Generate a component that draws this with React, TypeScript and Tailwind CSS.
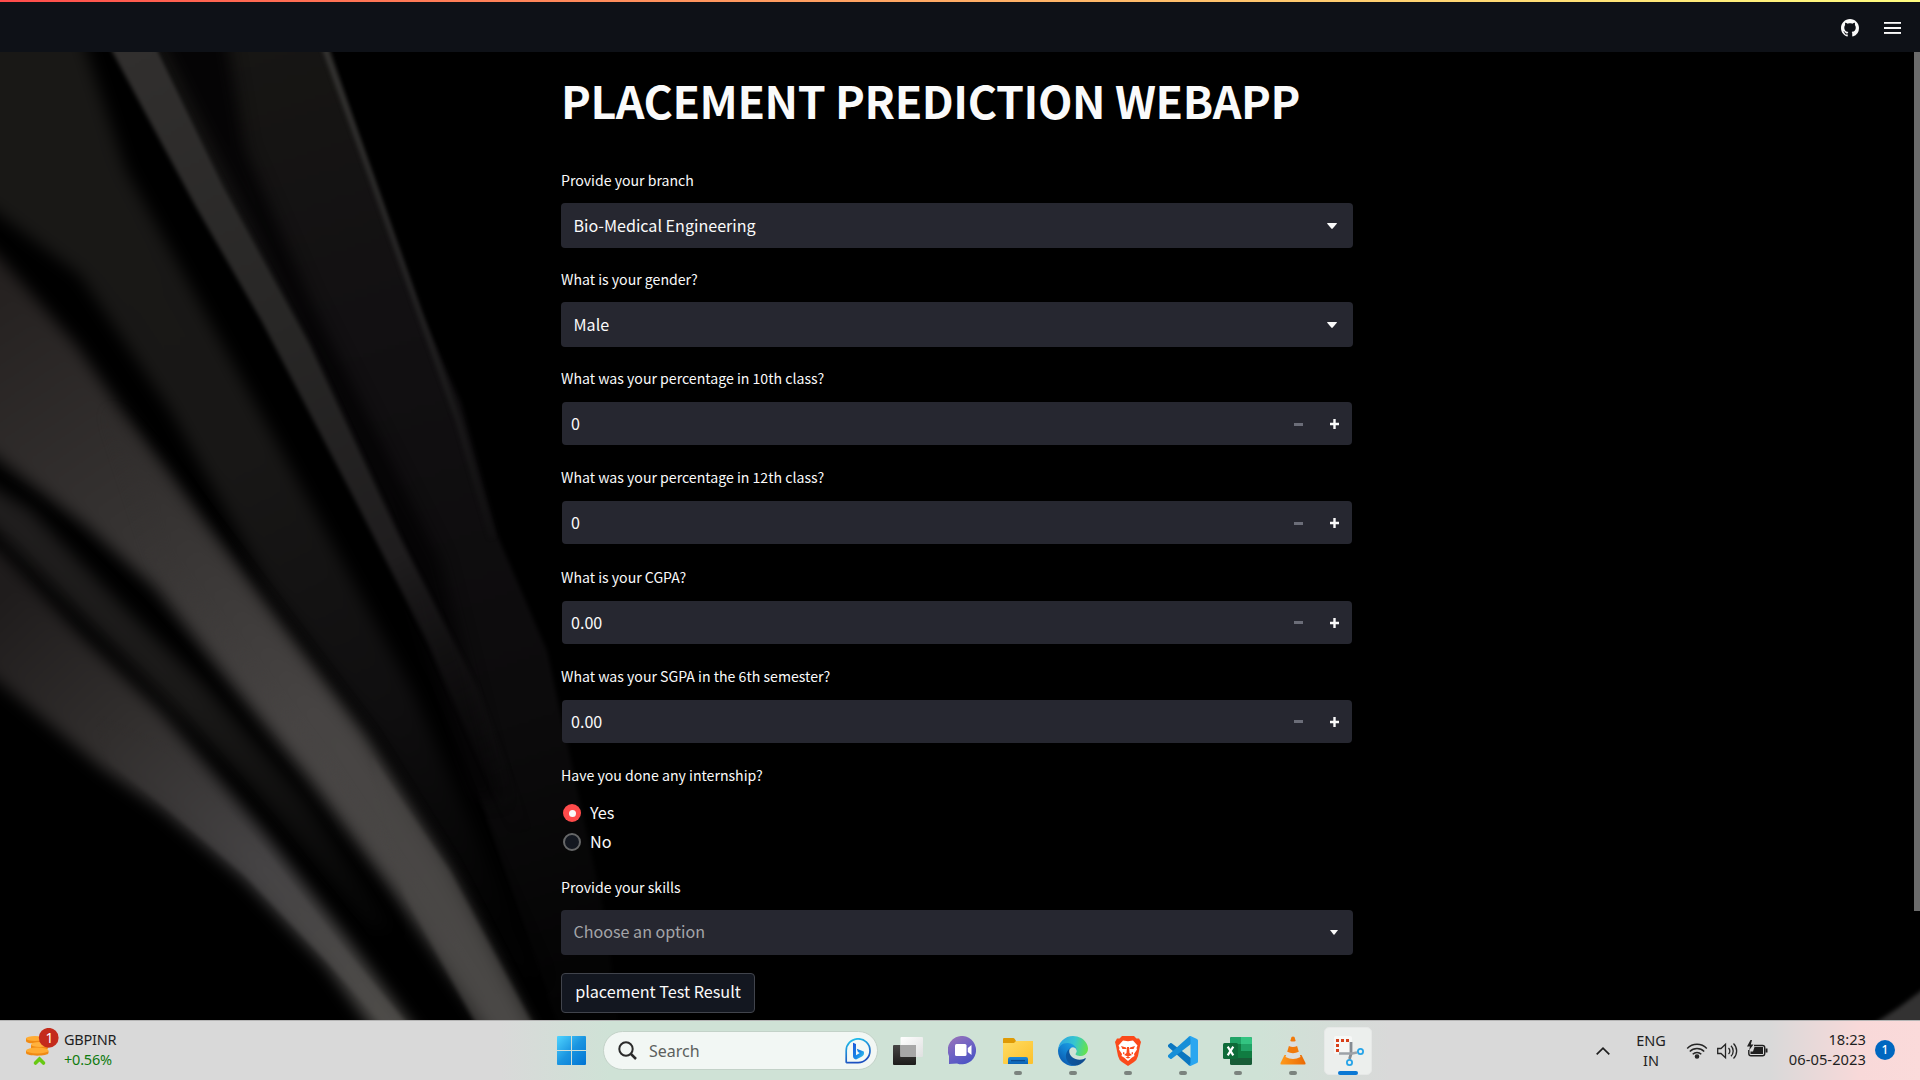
import type { ReactNode } from "react";

const SANS = "font-['Noto_Sans_CJK_SC','Noto_Sans',sans-serif]";

function Backdrop() {
  return (
    <svg className="absolute inset-0 h-full w-full" viewBox="0 52 1920 968" preserveAspectRatio="none" aria-hidden="true">
      <defs>
        <filter id="soft" x="-10%" y="-10%" width="120%" height="120%" colorInterpolationFilters="sRGB"><feGaussianBlur stdDeviation="2" /></filter>
        <filter id="softer" x="-20%" y="-20%" width="140%" height="140%" colorInterpolationFilters="sRGB"><feGaussianBlur stdDeviation="8" /></filter>
        <filter id="softest" x="-20%" y="-20%" width="140%" height="140%" colorInterpolationFilters="sRGB"><feGaussianBlur stdDeviation="16" /></filter>
        <linearGradient id="gA" gradientUnits="userSpaceOnUse" x1="130" y1="52" x2="530" y2="830">
          <stop offset="0" stopColor="#312f2e" /><stop offset=".35" stopColor="#282726" /><stop offset=".65" stopColor="#1f1d1e" /><stop offset="1" stopColor="#0d0c0d" stopOpacity="0" />
        </linearGradient>
        <linearGradient id="gB" gradientUnits="userSpaceOnUse" x1="240" y1="52" x2="560" y2="1020">
          <stop offset="0" stopColor="#171614" /><stop offset=".3" stopColor="#121012" /><stop offset=".7" stopColor="#0c0b0c" /><stop offset="1" stopColor="#030303" />
        </linearGradient>
        <linearGradient id="gC" gradientUnits="userSpaceOnUse" x1="60" y1="52" x2="500" y2="930">
          <stop offset="0" stopColor="#191816" /><stop offset=".45" stopColor="#181716" /><stop offset=".75" stopColor="#0f0e0f" /><stop offset="1" stopColor="#020202" />
        </linearGradient>
        <linearGradient id="gE" gradientUnits="userSpaceOnUse" x1="0" y1="280" x2="500" y2="1020">
          <stop offset="0" stopColor="#252120" /><stop offset=".3" stopColor="#353231" /><stop offset=".6" stopColor="#474443" /><stop offset="1" stopColor="#4b4947" />
        </linearGradient>
        <linearGradient id="gF" gradientUnits="userSpaceOnUse" x1="0" y1="480" x2="370" y2="920">
          <stop offset="0" stopColor="#201e1e" /><stop offset=".5" stopColor="#1a1918" /><stop offset="1" stopColor="#060606" />
        </linearGradient>
        <linearGradient id="gH" gradientUnits="userSpaceOnUse" x1="0" y1="600" x2="400" y2="1020">
          <stop offset="0" stopColor="#1f1c1c" /><stop offset=".3" stopColor="#312e2d" /><stop offset=".65" stopColor="#464445" /><stop offset="1" stopColor="#4f4d4a" />
        </linearGradient>
        <linearGradient id="gEdge" gradientUnits="userSpaceOnUse" x1="320" y1="52" x2="500" y2="560">
          <stop offset="0" stopColor="#3a3937" /><stop offset=".5" stopColor="#262525" /><stop offset="1" stopColor="#0f0e0f" />
        </linearGradient>
      </defs>
      <rect y="52" width="1920" height="968" fill="#000" />
      <polygon points="155,40 327,40 371,172 420,310 461,403 498,537 547,651 604,913 620,1030 560,1030 480,800 384,500 310,344 224,186" fill="url(#gB)" filter="url(#soft)" />
      <polygon points="155,30 225,30 245,150 310,300 440,560 500,800 470,800 384,510 250,220" fill="#050405" filter="url(#softer)" />
      <polyline points="322,40 329,60 371,176 420,314 458,420 492,537" fill="none" stroke="url(#gEdge)" strokeWidth="5" filter="url(#soft)" />
      <polygon points="-40,20 76,20 126,170 209,320 314,510 412,690 540,980 500,960 380,740 270,590 170,410 80,275 -40,185" fill="url(#gC)" filter="url(#softer)" />
      <polygon points="106,40 153,40 224,186 310,344 400,537 478,689 530,830 510,830 429,645 355,500 261,320 196,207" fill="url(#gA)" filter="url(#soft)" />
      <polygon points="-40,225 0,258 77,346 158,463 200,521 282,630 363,737 445,868 536,1045 500,1045 392,889 306,776 224,675 155,588 85,525 -40,430" fill="url(#gE)" filter="url(#softer)" />
      <polygon points="110,410 163,467 204,524 286,634 367,741 449,873 538,1045 505,1045 415,900 325,770 240,660 160,560" fill="url(#gE)" filter="url(#softer)" opacity=".6" />
      <polygon points="370,755 449,870 541,1040 485,1040 405,895" fill="url(#gE)" filter="url(#soft)" opacity=".6" />
      <polygon points="-20,480 30,510 122,605 204,685 306,800 390,930 370,925 250,785 122,655 -20,515" fill="url(#gF)" filter="url(#softer)" />
      <polygon points="-40,535 0,550 80,635 161,712 263,832 345,937 425,1045 385,1045 327,965 245,879 163,810 102,768 0,683 -40,655" fill="url(#gH)" filter="url(#softer)" />
      <polygon points="100,720 170,750 265,850 345,950 416,1035 393,1035 327,961 245,875 163,805 110,762" fill="url(#gH)" filter="url(#soft)" opacity=".7" />
      <polygon points="1872,1025 1898,1008 1925,988 1925,1025" fill="#333232" filter="url(#soft)" />
    </svg>
  );
}

function Label({ children }: { children: ReactNode }) {
  return <div className="mb-[11px] h-6 whitespace-nowrap text-[14.12px] leading-6 text-[#fafafa]">{children}</div>;
}

function Select({ label, value }: { label: string; value: string }) {
  return (
    <div className="mb-[19.160px]">
      <Label>{label}</Label>
      <div className="flex h-[45px] items-center justify-between rounded-[4px] bg-[#262730] pl-[12.5px] pr-4">
        <span className="mb-[2px] text-[16.1px] leading-6 text-[#fafafa]">{value}</span>
        <svg className="mt-px" width="10" height="6" viewBox="0 0 10 6"><path d="M0 0.4Q0 0 .6 0H9.4Q10 0 10 .5L5.7 5.6Q5 6.2 4.3 5.6Z" fill="#fafafa" /></svg>
      </div>
    </div>
  );
}

function NumberField({ label, value }: { label: string; value: string }) {
  return (
    <div className="mb-[19.160px]">
      <Label>{label}</Label>
      <div className="h-[45px] p-px">
        <div className="flex h-[43px] items-center rounded-[4px] bg-[#262730] pl-[9px] pr-[13px]">
          <span className="mb-px flex-1 text-[16.1px] leading-6 text-[#fafafa]">{value}</span>
          <span className="mr-[27px] mt-px h-[3px] w-[9px] bg-[#6b6d78]" />
          <svg className="mt-px" width="9" height="10" viewBox="0 0 9 10"><path d="M4.5 0v10M0 5h9" stroke="#fafafa" strokeWidth="2.4" /></svg>
        </div>
      </div>
    </div>
  );
}

function Radio({ label, on }: { label: string; on?: boolean }) {
  return (
    <div className="flex h-[29px] items-center gap-[9px] pl-[2px]">
      {on ? (
        <span className="flex size-[18px] items-center justify-center rounded-full bg-[#ff4b4b]"><span className="size-[7px] rounded-full bg-[#fafafa]" /></span>
      ) : (
        <span className="size-[18px] rounded-full border-2 border-[#666768] bg-[#131720]" />
      )}
      <span className="mb-[2px] text-[16.2px] leading-6 text-[#fafafa]">{label}</span>
    </div>
  );
}

function Header() {
  return (
    <header className="h-[52px] bg-[#0e1117]">
      <div className="h-[2px] bg-gradient-to-r from-[#ff4b4b] to-[#fffd80]" />
      <div className="flex h-[50px] items-center justify-end gap-[25px] pr-[19px] pb-px">
        <svg className="mt-[3px]" width="18" height="18" viewBox="0 0 16 16" fill="#fafafa"><path fillRule="evenodd" d="M8 0C3.58 0 0 3.58 0 8c0 3.54 2.29 6.53 5.47 7.59.4.07.55-.17.55-.38 0-.19-.01-.82-.01-1.49-2.01.37-2.53-.49-2.69-.94-.09-.23-.48-.94-.82-1.13-.28-.15-.68-.52-.01-.53.63-.01 1.08.58 1.23.82.72 1.21 1.87.87 2.33.66.07-.52.28-.87.51-1.07-1.78-.2-3.64-.89-3.64-3.95 0-.87.31-1.59.82-2.15-.08-.2-.36-1.02.08-2.12 0 0 .67-.21 2.2.82.64-.18 1.32-.27 2-.27s1.36.09 2 .27c1.53-1.04 2.2-.82 2.2-.82.44 1.1.16 1.92.08 2.12.51.56.82 1.27.82 2.15 0 3.07-1.87 3.75-3.65 3.95.29.25.54.73.54 1.48 0 1.07-.01 1.93-.01 2.2 0 .21.15.46.55.38A8.01 8.01 0 0 0 16 8c0-4.42-3.58-8-8-8Z" /></svg>
        <svg className="mt-[3px]" width="17" height="12" viewBox="0 0 17 12" fill="#fafafa"><rect y="0" width="17" height="1.8" /><rect y="5" width="17" height="2" /><rect y="10" width="17" height="1.9" /></svg>
      </div>
    </header>
  );
}

function WindowsIcon() {
  return (
    <svg width="29" height="29" viewBox="0 0 29 29">
      <defs><linearGradient id="win" gradientUnits="userSpaceOnUse" x1="0" y1="0" x2="29" y2="29"><stop offset="0" stopColor="#4fd4ff" /><stop offset=".5" stopColor="#1b95e0" /><stop offset="1" stopColor="#0074d4" /></linearGradient></defs>
      <path fill="url(#win)" d="M1 0H14V14H0V1Q0 0 1 0ZM15 0H28Q29 0 29 1V14H15ZM0 15H14V29H1Q0 29 0 28ZM15 15H29V28Q29 29 28 29H15Z" />
    </svg>
  );
}

function BingIcon() {
  return (
    <svg width="26" height="26" viewBox="0 0 26 26">
      <defs>
        <linearGradient id="bingRing" x1="0" y1="0" x2=".3" y2="1"><stop offset="0" stopColor="#22c8ee" /><stop offset="1" stopColor="#1c4fc0" /></linearGradient>
        <linearGradient id="bingB" x1="0" y1="0" x2="1" y2="1"><stop offset="0" stopColor="#1c55d8" /><stop offset=".6" stopColor="#1a8ce8" /><stop offset="1" stopColor="#3fd5e8" /></linearGradient>
      </defs>
      <path d="M1.2 24.8V13A11.9 11.9 0 1 1 13 24.6H1.2Z" fill="#f4f9f6" stroke="url(#bingRing)" strokeWidth="1.7" />
      <path d="M8 4.8L11 6V17.2L14.8 15L12.9 14L11.8 10.8L18.8 13.6Q19.8 17 17 18.6L11 21.5Q8 20.5 8 18Z" fill="url(#bingB)" />
    </svg>
  );
}

function TaskViewIcon() {
  return (
    <svg width="30" height="28" viewBox="0 0 30 28">
      <defs><linearGradient id="tvD" x1="0" y1="0" x2="0" y2="1"><stop offset="0" stopColor="#474645" /><stop offset="1" stopColor="#1d1c1b" /></linearGradient><linearGradient id="tvL" x1="0" y1="0" x2="1" y2="1"><stop offset="0" stopColor="#fff" /><stop offset="1" stopColor="#dfe0e0" /></linearGradient></defs>
      <rect y="8" width="23" height="20" rx="1" fill="url(#tvD)" />
      <rect x="7.5" width="22.5" height="20" rx="1" fill="url(#tvL)" />
      <rect x="7.5" y="8" width="15.5" height="12" fill="#a7a7a7" />
    </svg>
  );
}

function ChatIcon() {
  return (
    <svg width="30" height="29" viewBox="0 0 30 29">
      <defs><linearGradient id="chat" x1=".1" y1="0" x2=".7" y2="1"><stop offset="0" stopColor="#9a73b8" /><stop offset=".5" stopColor="#7063c4" /><stop offset="1" stopColor="#4b53c4" /></linearGradient></defs>
      <path d="M15 0A14.2 14.2 0 1 1 9 27.5L1 28V20A14.2 14.2 0 0 1 15 0Z" fill="url(#chat)" />
      <rect x="7" y="8" width="11.5" height="12" rx="1.5" fill="#fff" /><path d="M19.8 12L23.5 9V19L19.8 16Z" fill="#fff" />
    </svg>
  );
}

function FolderIcon() {
  return (
    <svg width="30" height="28" viewBox="0 0 30 28">
      <defs><linearGradient id="fold" x1="0" y1="0" x2="1" y2="1"><stop offset="0" stopColor="#ffdc62" /><stop offset="1" stopColor="#fcc02b" /></linearGradient><linearGradient id="foldB" x1="0" y1="0" x2="0" y2="1"><stop offset="0" stopColor="#1d8ada" /><stop offset="1" stopColor="#0b61b4" /></linearGradient></defs>
      <path d="M0 2Q0 1 1 1H10.5Q11.5 1 13 4H30V10H0Z" fill="#df9a05" />
      <path d="M0 6Q9 6 11 6L13 4H30V26Q30 27 29 27H1Q0 27 0 26Z" fill="url(#fold)" />
      <path d="M5 27V22Q5 20 7 20H23Q25 20 25 22V27Z" fill="url(#foldB)" /><rect x="8" y="23" width="14" height="1.3" fill="#0a4a90" />
    </svg>
  );
}

function EdgeIcon() {
  return (
    <svg width="30" height="30" viewBox="0 0 256 256">
      <defs>
        <linearGradient id="ed1" gradientUnits="userSpaceOnUse" x1="63" y1="178" x2="241" y2="178"><stop offset="0" stopColor="#0c59a4" /><stop offset="1" stopColor="#114a8b" /></linearGradient>
        <linearGradient id="ed2" gradientUnits="userSpaceOnUse" x1="157" y1="100" x2="46" y2="221"><stop offset="0" stopColor="#1b9de2" /><stop offset=".5" stopColor="#1383d2" /><stop offset="1" stopColor="#0c60b5" /></linearGradient>
        <linearGradient id="ed3" gradientUnits="userSpaceOnUse" x1="20" y1="50" x2="250" y2="110"><stop offset="0" stopColor="#2ea7e0" /><stop offset=".5" stopColor="#36c6cf" /><stop offset="1" stopColor="#66e34b" /></linearGradient>
      </defs>
      <path fill="url(#ed1)" d="M231 190.500a94 94 0 0 1-10.500 4.700 102 102 0 0 1-36 6.500c-47.500 0-88.800-32.700-88.800-74.500a31.700 31.700 0 0 1 16.500-27.500c-43 1.800-54 46.600-54 72.800 0 74.300 68.500 81.800 83.200 81.800 8 0 20-2.300 27.200-4.600l1.300-.4a128 128 0 0 0 66.600-52.800 4 4 0 0 0-5.500-6Z" />
      <path fill="url(#ed2)" d="M105.700 241.400a79 79 0 0 1-22.700-21.300 80.700 80.700 0 0 1 29.500-120.500c3.100-1.500 8.500-4.100 15.600-4a32.400 32.400 0 0 1 25.700 13 31.900 31.900 0 0 1 6.300 18.700c0-.2 24.500-79.600-80-79.600-43.900 0-80 41.600-80 78.200a130 130 0 0 0 12.100 56 128 128 0 0 0 156.400 67 75.500 75.500 0 0 1-62.800-8Z" />
      <path fill="url(#ed3)" d="M152.300 148.900c-.8 1-3.300 2.500-3.300 5.700 0 2.600 1.700 5.100 4.700 7.200 14.400 10 41.500 8.700 41.600 8.700 10.700 0 21.100-2.900 30.300-8.300A61.400 61.400 0 0 0 256 109.200c.3-22.400-8-37.300-11.300-43.900C223.500 23.900 177.700 0 128 0A128 128 0 0 0 0 126.200c.5-36.500 36.800-66 80-66 3.500 0 23.500.3 42 10 16.300 8.600 24.900 19 30.800 29.200 6.200 10.700 7.300 24.100 7.300 29.500 0 5.300-2.700 13.300-7.800 20Z" />
    </svg>
  );
}

function BraveIcon() {
  return (
    <svg width="26" height="30" viewBox="0 0 26 30">
      <path d="M7 0H19L21.500 2.600L24 2.500L26 6L25.200 9L23 20Q22 24 19 26L13 30L7 26Q4 24 3 20L.8 9L0 6L2 2.500L4.500 2.600Z" fill="#fb4a1b" />
      <path d="M8 4.500L13 5.200L18 4.500L22.500 9.500L21.500 12L22 13.500L19 18L19.500 20L17 21.500L13 25L9 21.500L6.500 20L7 18L4 13.500L4.500 12L3.500 9.500Z" fill="#fff" />
      <path d="M6 10L11 11.500L11.500 13L7.500 13ZM20 10L15 11.500L14.500 13L18.500 13ZM12 11H14L14.500 17L17 19L13 20.500L9 19L11.500 17ZM8 16L10 17L8 18.500ZM18 16L16 17L18 18.500ZM10.500 21.500L13 20.500L15.500 21.500L13 22.500Z" fill="#fb4a1b" />
    </svg>
  );
}

function CodeIcon() {
  return (
    <svg width="30" height="30" viewBox="0 0 30 30">
      <path d="M0 9L2.500 7Q3 6.700 3.700 7.200L23 22V29.500Q21.500 30 20.500 29L.3 11Q-.3 10 0 9Z" fill="#0b76c0" />
      <path d="M0 21L2.500 23Q3 23.300 3.700 22.800L23 8V.500Q21.500 0 20.500 1L.3 19Q-.3 20 0 21Z" fill="#168fd8" />
      <path d="M22.500 0L29 3Q30 3.500 30 4.500V25.500Q30 26.500 29 27L22.500 30Q21.500 30 20.500 29Q22.500 29.500 22.500 27V3Q22.500 .500 20.500 1Q21.500 0 22.500 0Z" fill="#2aa6f0" />
    </svg>
  );
}

function ExcelIcon() {
  return (
    <svg width="29" height="28" viewBox="0 0 29 28">
      <rect x="7" width="22" height="28" rx="1.500" fill="#185c37" /><path d="M7 1.500Q7 0 8.500 0H18V7H7Z" fill="#21a366" /><path d="M18 0H27.500Q29 0 29 1.500V7H18Z" fill="#33c481" /><path d="M7 7H18V21H7Z" fill="#107c41" /><path d="M18 7H29V14H18Z" fill="#21a366" /><path d="M18 14H29V21H18Z" fill="#107c41" />
      <rect y="6" width="15" height="16" rx="1.500" fill="#0e6b39" />
      <path d="M4.700 9.700L10.300 18.300M10.300 9.700L4.700 18.300" stroke="#fff" strokeWidth="2.200" />
    </svg>
  );
}

function ConeIcon() {
  return (
    <svg width="26" height="29" viewBox="0 0 26 29">
      <defs><linearGradient id="cone" x1="0" y1="0" x2="1" y2="0"><stop offset="0" stopColor="#ff9a1c" /><stop offset="1" stopColor="#ea6a04" /></linearGradient></defs>
      <path d="M4.500 19H21.500L25.500 27Q26 28.500 24.500 28.500H1.500Q0 28.500 .500 27Z" fill="url(#cone)" />
      <path d="M11.500 1Q13 0 14.500 1L20.500 21Q13 25 5.500 21Z" fill="#dcdedd" />
      <path d="M11.500 1Q13 0 14.500 1L15.700 5Q13 6 10.300 5ZM8.900 10Q13 12 17.100 10L18.800 15.800Q13 18.500 7.200 15.800Z" fill="#f17a0a" />
    </svg>
  );
}

function SnipIcon() {
  return (
    <svg className="ml-[2px]" width="30" height="30" viewBox="0 0 30 30" fill="none">
      <rect x="0" y="0" width="18" height="18" rx="2" fill="#fff" opacity=".55" />
      <path d="M2 3H5V6H2ZM7 3H10V6H7ZM12 3H15V6H12ZM2 8H5V11H2ZM2 13H5V16H2Z" fill="#d8401a" />
      <path d="M17 6V18L15.500 23" stroke="#858b92" strokeWidth="2.800" /><path d="M5 17.500H18L23 16.500" stroke="#9da2a8" strokeWidth="2.600" />
      <circle cx="26.500" cy="15.500" r="2.600" stroke="#27a4e8" strokeWidth="1.800" /><circle cx="15.500" cy="26.500" r="2.600" stroke="#27a4e8" strokeWidth="1.800" />
    </svg>
  );
}

function TaskSlot({ children, state }: { children: ReactNode; state?: "open" | "active" }) {
  return (
    <div className="relative flex h-[48px] w-[55px] items-center justify-center">
      {state === "active" && <div className="absolute inset-y-0 left-[4px] w-[48px] rounded-[5px] border border-[#e6e8e7] bg-[#ecefed]" />}
      <div className="relative">{children}</div>
      {state === "open" && <div className="absolute bottom-0 left-[23.500px] h-[4px] w-[8px] rounded-full bg-[#7b837e]" />}
      {state === "active" && <div className="absolute bottom-0 left-[18px] h-[4px] w-[20px] rounded-full bg-[#0a78d4]" />}
    </div>
  );
}

function Taskbar() {
  return (
    <footer className="flex h-[60px] items-center border-t border-[#b5b5b5] bg-[linear-gradient(90deg,#d9d9d9_0px,#d9d9d9_500px,#cfe2d6_610px,#cfe2d6_1260px,#d9d9d9_1390px,#d9d9d9_1770px,#f8d9d9_1860px,#fbdada_1920px)] font-['Noto_Sans','Open_Sans',sans-serif] text-[#1f1f1f]">
      <div className="flex h-full w-[557px] items-start pl-[25px] pt-[7px]">
        <svg width="34" height="38" viewBox="0 0 34 38">
          <path d="M1 10V13C1 16.500 19 16.500 19 13V10M6 17V20C6 23.500 23 23.500 23 20V16M1 23V25C1 28.500 23.500 28.500 23.500 25V23" fill="#f08a14" />
          <ellipse cx="10" cy="10.500" rx="9" ry="2.600" fill="#ffac33" /><ellipse cx="14.500" cy="16.500" rx="8.500" ry="2.600" fill="#ffb13d" /><ellipse cx="12.300" cy="22.500" rx="11.300" ry="3" fill="#ffac33" />
          <path d="M10.500 35L14.500 31L18.500 35" fill="none" stroke="#68c914" strokeWidth="3.600" strokeLinecap="round" />
          <circle cx="23.700" cy="9.800" r="9.900" fill="#c42b1c" />
          <text x="20.500" y="15" fontSize="14" fill="#fff" fontFamily="Noto Sans, sans-serif">1</text>
        </svg>
        <div className="ml-[5px] mt-px text-[14.500px] leading-5">
          <div className="-tracking-[0.25px]">GBPINR</div>
          <div className="text-[#0f7b0f] -tracking-[0.2px]">+0.56%</div>
        </div>
      </div>
      <WindowsIcon />
      <div className="ml-[17px] flex h-[39px] w-[275px] items-center rounded-full border border-[#c3d2c8] bg-[#f2f7f4] pl-[14px] pr-[6px]">
        <svg width="19" height="19" viewBox="0 0 19 19" fill="none" stroke="#2a2a2a" strokeWidth="2"><circle cx="8" cy="8" r="6.700" /><path d="M13 13L18 18" strokeWidth="2.500" /></svg>
        <span className="ml-[12px] flex-1 text-[16px] leading-6 text-[#5c605d]">Search</span>
        <BingIcon />
      </div>
      <div className="ml-[2px] flex items-center">
        <TaskSlot><TaskViewIcon /></TaskSlot>
        <TaskSlot><ChatIcon /></TaskSlot>
        <TaskSlot state="open"><FolderIcon /></TaskSlot>
        <TaskSlot state="open"><EdgeIcon /></TaskSlot>
        <TaskSlot state="open"><BraveIcon /></TaskSlot>
        <TaskSlot state="open"><CodeIcon /></TaskSlot>
        <TaskSlot state="open"><ExcelIcon /></TaskSlot>
        <TaskSlot state="open"><ConeIcon /></TaskSlot>
        <TaskSlot state="active"><SnipIcon /></TaskSlot>
      </div>
      <div className="ml-auto flex items-center pr-[25px] text-[14.500px] leading-5">
        <svg className="mr-[26px]" width="14" height="8" viewBox="0 0 14 8" fill="none" stroke="#1f1f1f" strokeWidth="1.700"><path d="M.700 7.300L7 1.200L13.300 7.300" /></svg>
        <div className="mb-px mr-[20px] w-[30px] text-center">ENG<br />IN</div>
        <svg className="mb-px mr-[9px]" width="22" height="17" viewBox="0 0 22 17" fill="none" stroke="#252525" strokeWidth="1.400"><path d="M1.200 6.500A13.500 13.500 0 0 1 20.800 6.500M3.800 9.500A10 10 0 0 1 18.200 9.500M6.700 12.200A6.200 6.200 0 0 1 15.300 12.200" /><circle cx="11" cy="14.500" r="1.600" fill="#252525" /></svg>
        <svg className="mr-[9px]" width="21" height="18" viewBox="0 0 21 18" fill="none" stroke="#252525" strokeWidth="1.300"><path d="M.700 6.500V11.500H4L8.500 15.800V2.200L4 6.500ZM11.500 6A4 4 0 0 1 11.500 12M14 3.700A7.500 7.500 0 0 1 14 14.300M16.500 1.500A10.500 10.500 0 0 1 16.500 16.500" /></svg>
        <svg className="mb-[3px] mr-[18px]" width="21" height="18" viewBox="0 0 21 18"><path d="M7 5.500H15.500Q17.700 5.500 17.700 7.500V13.500Q17.700 15.700 15.500 15.700H4Q1.800 15.700 1.800 13.500V10" fill="none" stroke="#1f1f1f" strokeWidth="1.400" /><path d="M7.500 7H16V14H3.500V11.500H6ZM18.500 8.500H20.500V12.500H18.500ZM3.500 0L0 6.500H3L2 10.500L6.500 4.500H3.800L5 0Z" fill="#1f1f1f" /></svg>
        <div className="mb-[4px] mr-[9px] w-[80px] whitespace-nowrap text-right text-[14.700px]"><div>18:23</div><div className="-ml-2 tracking-[0.06px]">06-05-2023</div></div>
        <div className="mb-px flex size-[20px] items-center justify-center rounded-full bg-[#0067c0] text-[12px] font-medium leading-none text-white">1</div>
      </div>
    </footer>
  );
}

export default function App() {
  return (
    <div className="flex h-[1080px] w-[1920px] flex-col overflow-hidden bg-black">
      <Header />
      <main className={`relative h-[968px] overflow-hidden ${SANS}`}>
        <Backdrop />
        <div className="relative ml-[561px] w-[792px] pt-[18px]">
          <h1 className="mb-[38px] h-[60px] whitespace-nowrap text-[44.800px] font-bold leading-[60px] -tracking-[0.41px] text-[#fafafa]">PLACEMENT PREDICTION WEBAPP</h1>
          <Select label="Provide your branch" value="Bio-Medical Engineering" />
          <Select label="What is your gender?" value="Male" />
          <NumberField label="What was your percentage in 10th class?" value="0" />
          <NumberField label="What was your percentage in 12th class?" value="0" />
          <NumberField label="What is your CGPA?" value="0.00" />
          <NumberField label="What was your SGPA in the 6th semester?" value="0.00" />
          <Label>Have you done any internship?</Label>
          <div className="mb-[18px] pt-px">
            <Radio label="Yes" on />
            <Radio label="No" />
          </div>
          <Label>Provide your skills</Label>
          <div className="flex h-[45px] items-center justify-between rounded-[4px] bg-[#262730] pl-[12.500px] pr-[15px]">
            <span className="mb-[2px] text-[16.100px] leading-6 text-[#a3a4a8]">Choose an option</span>
            <svg width="8" height="5" viewBox="0 0 8 5"><path d="M0 0H8L4.500 4.500Q4 5 3.500 4.500Z" fill="#fafafa" /></svg>
          </div>
          <button className="mt-[18px] flex h-[40px] w-[194px] items-center justify-center rounded-[4px] border border-[#41444c] bg-[#131720] pb-[3px] text-[16.200px] text-[#fafafa]">placement Test Result</button>
        </div>
        <div className="absolute right-0 top-0 h-[859px] w-[6px] bg-[#6b6b6b]" />
      </main>
      <Taskbar />
    </div>
  );
}
